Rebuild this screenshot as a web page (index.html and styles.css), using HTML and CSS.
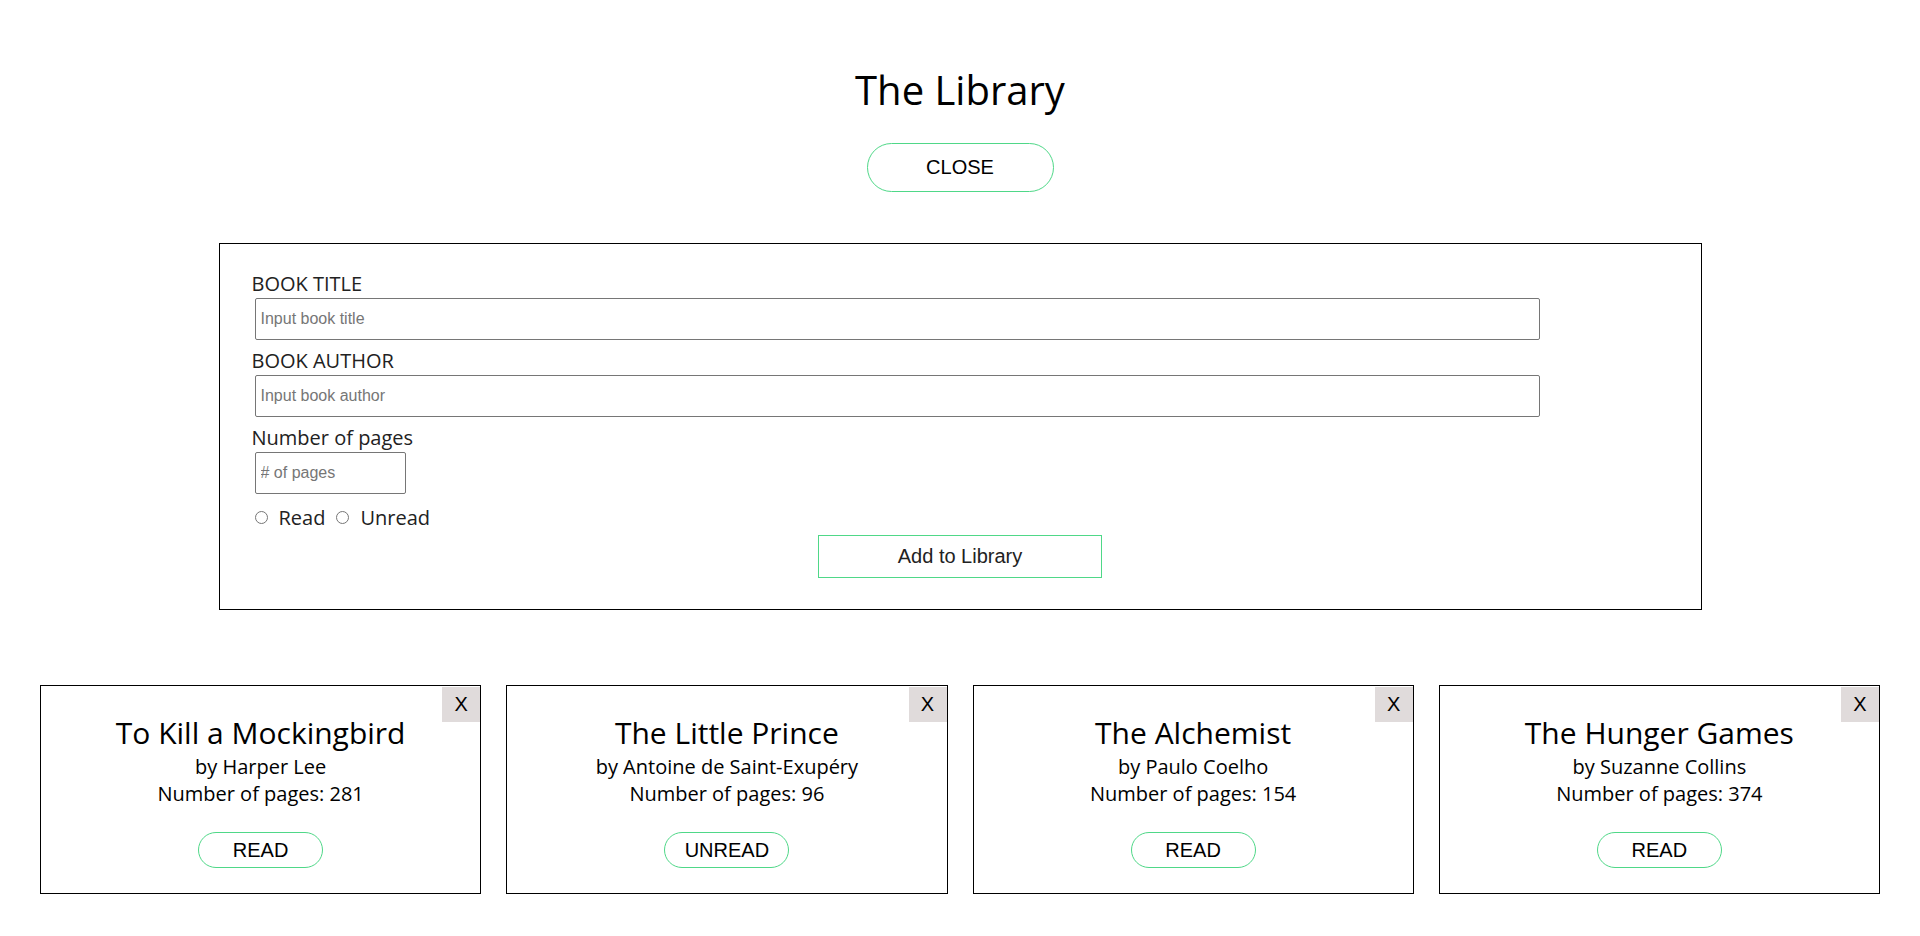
FILE: index.html
```html
<!DOCTYPE html>
<html lang="en">
<head>
<meta charset="utf-8">
<title>The Library</title>
<link rel="stylesheet" href="styles.css">
</head>
<body>
<header class="header">
  <h1 class="page-title">The Library</h1>
  <button class="pill-btn close-btn" type="button">CLOSE</button>
</header>

<form class="book-form">
  <label class="field-label" for="title">BOOK TITLE</label>
  <input class="text-input wide" id="title" type="text" placeholder="Input book title">
  <label class="field-label" for="author">BOOK AUTHOR</label>
  <input class="text-input wide" id="author" type="text" placeholder="Input book author">
  <label class="field-label" for="pages">Number of pages</label>
  <input class="text-input narrow" id="pages" type="text" placeholder="# of pages">
  <div class="radio-row">
    <input class="radio" type="radio" name="status" id="r-read"><label for="r-read" class="radio-label">Read</label>
    <input class="radio" type="radio" name="status" id="r-unread"><label for="r-unread" class="radio-label">Unread</label>
  </div>
  <div class="submit-row">
    <button class="submit-btn" type="button">Add to Library</button>
  </div>
</form>

<section class="cards">
  <article class="card">
    <button class="remove-btn" type="button">X</button>
    <h2 class="card-title">To Kill a Mockingbird</h2>
    <p class="card-line">by Harper Lee</p>
    <p class="card-line">Number of pages: 281</p>
    <button class="pill-btn status-btn" type="button">READ</button>
  </article>
  <article class="card">
    <button class="remove-btn" type="button">X</button>
    <h2 class="card-title">The Little Prince</h2>
    <p class="card-line">by Antoine de Saint-Exupéry</p>
    <p class="card-line">Number of pages: 96</p>
    <button class="pill-btn status-btn" type="button">UNREAD</button>
  </article>
  <article class="card">
    <button class="remove-btn" type="button">X</button>
    <h2 class="card-title">The Alchemist</h2>
    <p class="card-line">by Paulo Coelho</p>
    <p class="card-line">Number of pages: 154</p>
    <button class="pill-btn status-btn" type="button">READ</button>
  </article>
  <article class="card">
    <button class="remove-btn" type="button">X</button>
    <h2 class="card-title">The Hunger Games</h2>
    <p class="card-line">by Suzanne Collins</p>
    <p class="card-line">Number of pages: 374</p>
    <button class="pill-btn status-btn" type="button">READ</button>
  </article>
</section>
</body>
</html>
```

FILE: styles.css
```css
* { box-sizing: border-box; }

body {
  margin: 0;
  font-family: "Open Sans", sans-serif;
  color: #000;
  background: #fff;
}

.header {
  display: flex;
  flex-direction: column;
  align-items: center;
}

.page-title {
  margin: 63px 0 0;
  font-size: 40px;
  font-weight: 400;
  line-height: 54px;
}

.pill-btn {
  font-family: "Liberation Sans", Arial, sans-serif;
  font-size: 20px;
  color: #000;
  background: #fff;
  border: 1px solid #4fd888;
  border-radius: 999px;
  padding: 0;
  cursor: pointer;
}

.close-btn {
  margin-top: 26px;
  width: 187px;
  height: 49px;
}

.book-form {
  width: 1483px;
  margin: 51px auto 0;
  border: 1px solid #000;
  padding: 26px 32px 31px;
}

.field-label {
  display: block;
  font-size: 20px;
  line-height: 27px;
  color: #222;
}

.text-input {
  display: block;
  height: 42px;
  margin: 1px 0 7px 3px;
  border: 1px solid #767676;
  border-radius: 2px;
  padding: 0 5px;
  font-family: "Liberation Sans", Arial, sans-serif;
  font-size: 16px;
  color: #000;
}

.text-input::placeholder { color: #767676; }

.wide { width: 1285px; }
.narrow { width: 151px; margin-bottom: 0; }

.radio-row {
  display: flex;
  align-items: center;
  height: 27px;
  margin-top: 10px;
  margin-left: 3px;
}

.radio {
  width: 13px;
  height: 13px;
  margin: 0 11px 0 0;
}

.radio-label {
  font-size: 20px;
  line-height: 27px;
  color: #222;
  margin-right: 11px;
}

.submit-row {
  display: flex;
  justify-content: center;
  margin-top: 4px;
}

.submit-btn {
  width: 284px;
  height: 43px;
  font-family: "Liberation Sans", Arial, sans-serif;
  font-size: 20px;
  color: #222;
  background: #fff;
  border: 1px solid #4fd888;
  padding: 0;
}

.cards {
  display: grid;
  grid-template-columns: repeat(4, 1fr);
  gap: 25px;
  padding: 0 40px;
  margin-top: 75px;
}

.card {
  position: relative;
  height: 209px;
  border: 1px solid #000;
  padding-top: 26px;
  display: flex;
  flex-direction: column;
  align-items: center;
  text-align: center;
}

.remove-btn {
  position: absolute;
  top: 1px;
  right: 0;
  width: 38px;
  height: 35px;
  border: none;
  background: #e0dbdb;
  font-family: "Liberation Sans", Arial, sans-serif;
  font-size: 20px;
  color: #000;
  padding: 0;
}

.card-title {
  margin: 0;
  font-size: 30px;
  font-weight: 400;
  line-height: 41px;
}

.card-line {
  margin: 0;
  font-size: 20px;
  line-height: 27px;
}

.status-btn {
  margin-top: 25px;
  width: 125px;
  height: 36px;
}
```
